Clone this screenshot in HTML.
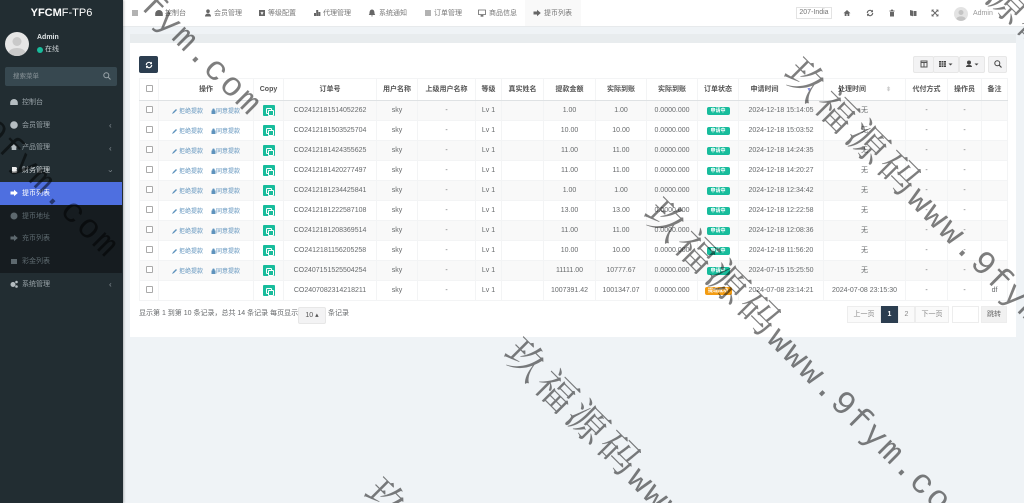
<!DOCTYPE html>
<html lang="zh"><head><meta charset="utf-8"><title>提币列表</title>
<style>
*{box-sizing:border-box}
html,body{margin:0;padding:0;width:1024px;height:503px;overflow:hidden;background:#eff3f6}
#root{position:relative;width:1024px;height:503px;overflow:hidden;contain:strict;background:#eff3f6;font:7px "Liberation Sans","Noto Sans CJK SC",sans-serif;color:#676a6c}
#ui{position:absolute;left:0;top:0;width:1024px;height:503px;filter:blur(.3px)}
.a{position:absolute;white-space:nowrap}
#side{position:absolute;left:0;top:0;width:123px;height:503px;background:#222d32;color:#8a9499;box-shadow:1px 0 2px rgba(0,0,0,.25)}
.mi{position:absolute;left:22px;white-space:nowrap;font-size:7px;line-height:10px;color:#9aa4a9;padding-top:1px}
.ic{position:absolute;left:10px;width:8px;height:8px;fill:#b5bdc1}
.ar{position:absolute;left:109px;font-size:8px;line-height:10px;color:#8a9499}
#top{position:absolute;left:123px;top:0;width:901px;height:27px;background:#fff;border-bottom:1px solid #e7eaec}
.tab{position:absolute;top:8px;line-height:10px;font-size:7px;color:#777;white-space:nowrap;padding-top:1px}
.ti{position:absolute;top:9px;width:8px;height:8px;fill:#666}
#panel{position:absolute;left:130px;top:43px;width:886px;height:294px;background:#fff}
#bar{position:absolute;left:130px;top:34px;width:886px;height:9px;background:#e8ecee}
table{position:absolute;left:139px;top:78px;width:868px;border-collapse:collapse;table-layout:fixed;font-size:7px;color:#676a6c}
th,td{border:1px solid #f3f4f5;padding:0;text-align:center;white-space:nowrap;overflow:hidden;line-height:10px}
th{height:22px;font-weight:bold;color:#555;border-bottom:1px solid #dfe2e4}
td{height:20px}
tbody tr:nth-child(odd){background:#f9f9f9}
.cb{display:inline-block;width:7px;height:7px;border:1px solid #aaa;border-radius:1px;background:#fff;vertical-align:-1px}
td.op{position:relative;color:#5f93bd;font-size:6px;text-align:left}
.op i{position:absolute;top:6px;width:30px;font-style:normal;line-height:10px}
.op svg{position:absolute;top:7px;width:5px;height:6px;fill:#5f93bd}
.g{display:inline-block;width:12px;height:11px;background:#18bc9c;border-radius:1px;position:relative;vertical-align:middle}
.g:before,.g:after{content:"";position:absolute;width:4px;height:4px;border:1px solid #fff;border-radius:1px}
.g:before{left:3px;top:3px}.g:after{left:5px;top:5px;background:#18bc9c}
.bd{display:inline-block;background:#18bc9c;color:#fff;font-size:5px;line-height:8px;height:8px;width:23px;border-radius:2px;font-weight:bold}
.or{background:#f39c12;width:27px}
.btn{position:absolute;background:#f3f3f4;border:1px solid #e7e7e7;color:#555;border-radius:2px;text-align:center}
.pg{position:absolute;top:306px;height:17px;line-height:15px;background:#fafafa;border:1px solid #ededed;color:#888;text-align:center;font-size:7px}
.wm{position:absolute;white-space:nowrap;font-family:"Noto Serif CJK SC","Liberation Serif",serif;font-size:40px;line-height:50px;letter-spacing:4px;color:#000;transform-origin:0 0;pointer-events:none;opacity:.5}
.wm span{font:34px/50px "Liberation Mono",monospace;letter-spacing:2px}
</style></head><body>
<div id="root">
<div id="ui">
<div id="bar"></div><div id="panel"></div>

<div id="top">
<svg class="ti" style="left:8px" viewBox="0 0 8 8"><path d="M1 1.500h6v1H1zM1 3.500h6v1H1zM1 5.500h6v1H1z"/></svg>
<svg class="ti" style="left:32px" viewBox="0 0 8 8"><path d="M4 1a3.800 3.800 0 0 0-3.800 3.800V7h7.600V4.800A3.800 3.800 0 0 0 4 1z"/></svg><span class="tab" style="left:42px">控制台</span>
<svg class="ti" style="left:81px" viewBox="0 0 8 8"><circle cx="4" cy="2.200" r="1.800"/><path d="M1 7.500c0-4 6-4 6 0z"/></svg><span class="tab" style="left:91px">会员管理</span>
<svg class="ti" style="left:135px" viewBox="0 0 8 8"><path d="M1 1h6v6H1z"/><path d="M3 3l1 2 1-2" stroke="#fff" fill="none"/></svg><span class="tab" style="left:145px">等级配置</span>
<svg class="ti" style="left:190px" viewBox="0 0 8 8"><path d="M1 4h2v3H1zM3.200 1h2v6h-2zM5.400 3h2v4h-2z"/></svg><span class="tab" style="left:200px">代理管理</span>
<svg class="ti" style="left:245px" viewBox="0 0 8 8"><path d="M4 .5c-2 0-2.500 2-2.500 4L.8 6h6.400l-.7-1.500c0-2-.5-4-2.500-4zM3 6.500h2L4 7.800z"/></svg><span class="tab" style="left:256px">系统通知</span>
<svg class="ti" style="left:301px" viewBox="0 0 8 8"><path d="M1 1.500h6v1H1zM1 3.500h6v1H1zM1 5.500h6v1H1z"/></svg><span class="tab" style="left:311px">订单管理</span>
<svg class="ti" style="left:355px" viewBox="0 0 8 8"><path d="M.5 1h7v4.500h-7zM3 6.500h2v.7H3z" fill="none" stroke="#666" stroke-width=".8"/></svg><span class="tab" style="left:366px">商品信息</span>
<div class="a" style="left:402px;top:0;width:56px;height:26px;background:#f9f9f9"></div>
<svg class="ti" style="left:410px" viewBox="0 0 8 8"><path d="M.5 2.500h3.500V.8L7.800 4 4 7.200V5.500H.5z"/></svg><span class="tab" style="left:421px">提币列表</span>
<div class="a" style="left:673px;top:7px;width:36px;height:12px;border:1px solid #e3e3e3;text-align:center;line-height:10px;color:#777;font-size:7px">207-India</div>
<svg class="ti" style="left:720px" viewBox="0 0 8 8"><path d="M4 1L.5 4.200h1.200V7h1.800V5h1v2h1.800V4.200h1.200z"/></svg>
<svg class="ti" style="left:743px" viewBox="0 0 8 8"><path d="M1.300 4a2.700 2.700 0 0 1 4.700-1.800M6.700 4A2.700 2.700 0 0 1 2 5.800" fill="none" stroke="#666" stroke-width="1.100"/><path d="M7 .6v2.600H4.500zM1 7.400V4.800h2.500z"/></svg>
<svg class="ti" style="left:765px" viewBox="0 0 8 8"><path d="M1.500 1.500h5v1h-5zM3 .6h2v1H3zM2 3h4v4.500H2z"/></svg>
<svg class="ti" style="left:786px" viewBox="0 0 8 8"><path d="M1 1l3 .8v5.500L1 6.500zM4.500 2h3v5h-3z"/></svg>
<svg class="ti" style="left:808px" viewBox="0 0 8 8"><path d="M1 1l6 6M7 1L1 7" stroke="#666" stroke-width="1"/><path d="M.6.600h2.500L.6 3.100zM7.400.6v2.500L4.900.6zM.6 7.400V4.900l2.500 2.500zM7.400 7.400H4.900l2.500-2.500z"/></svg>
<svg class="a" style="left:831px;top:7px" width="14" height="14" viewBox="0 0 14 14"><circle cx="7" cy="7" r="7" fill="#e3e3e3"/><circle cx="7" cy="5.500" r="2.500" fill="#c4c4c4"/><path d="M2.300 12c1-3.500 8.400-3.500 9.400 0a7 7 0 0 1-9.400 0z" fill="#c4c4c4"/></svg>
<span class="tab" style="left:850px;top:8px;color:#999">Admin</span>
</div>

<div id="side">
<div class="a" style="left:0;top:6px;width:123px;text-align:center;font-size:11px;line-height:14px;color:#fff;font-weight:bold">YFCM<span style="font-weight:normal">F-TP6</span></div>
<svg class="a" style="left:5px;top:32px" width="24" height="24" viewBox="0 0 24 24"><circle cx="12" cy="12" r="12" fill="#e6e6e6"/><circle cx="12" cy="9.500" r="4.500" fill="#c9c9c9"/><path d="M3.500 20.500c2-6 15-6 17 0a12 12 0 0 1-17 0z" fill="#c9c9c9"/></svg>
<div class="a" style="left:37px;top:33px;line-height:10px;color:#dfe4e6;font-weight:bold">Admin</div>
<div class="a" style="left:37px;top:47px;width:6px;height:6px;border-radius:50%;background:#18bc9c"></div>
<div class="a" style="left:45px;top:45px;line-height:10px;color:#ccd2d5">在线</div>
<div class="a" style="left:5px;top:67px;width:112px;height:19px;background:#374850;border-radius:2px;line-height:19px;padding-left:8px;color:#8a9499;font-size:6.500px">搜索菜单</div>
<svg class="a" style="left:103px;top:72px" width="8" height="8" viewBox="0 0 8 8"><circle cx="3.300" cy="3.300" r="2.500" fill="none" stroke="#9aa4a9"/><path d="M5 5l2.500 2.500" stroke="#9aa4a9"/></svg>

<svg class="ic" style="top:98px" viewBox="0 0 8 8"><path d="M4 1a3.800 3.800 0 0 0-3.800 3.800V7h7.600V4.800A3.800 3.800 0 0 0 4 1z"/></svg><div class="mi" style="top:97px">控制台</div>
<svg class="ic" style="top:121px" viewBox="0 0 8 8"><circle cx="4" cy="4" r="3.800"/></svg><div class="mi" style="top:120px">会员管理</div><div class="ar" style="top:121px">‹</div>
<svg class="ic" style="top:143px" viewBox="0 0 8 8"><path d="M4 1L.5 4.200h1.200V7h4.600V4.200h1.200z"/></svg><div class="mi" style="top:142px">产品管理</div><div class="ar" style="top:144px">‹</div>
<svg class="ic" style="top:166px;fill:#eee" viewBox="0 0 8 8"><path d="M2 1h3.500c2 0 2 2.800.5 3 1.800.2 1.800 3-.5 3H2z"/></svg><div class="mi" style="top:165px;color:#d5dadc">财务管理</div><div class="ar" style="top:166px;transform:rotate(-90deg);left:109px">‹</div>
<div class="a" style="left:0;top:182px;width:122px;height:23px;background:#4e6fe0"></div>
<svg class="ic" style="top:189px;fill:#fff" viewBox="0 0 8 8"><path d="M.5 2.500h3.500V.8L7.800 4 4 7.200V5.500H.5z"/></svg><div class="mi" style="top:188px;color:#fff">提币列表</div>
<div class="a" style="left:0;top:205px;width:122px;height:68px;background:#161c20"></div>
<svg class="ic" style="top:212px;fill:#5d686e" viewBox="0 0 8 8"><circle cx="4" cy="4" r="3.500"/></svg><div class="mi" style="top:211px;color:#5f6b71">提币地址</div>
<svg class="ic" style="top:234px;fill:#5d686e" viewBox="0 0 8 8"><path d="M.5 2.500h3.500V.8L7.800 4 4 7.200V5.500H.5z"/></svg><div class="mi" style="top:233px;color:#5f6b71">充币列表</div>
<svg class="ic" style="top:257px;fill:#5d686e" viewBox="0 0 8 8"><path d="M1 2h6v5H1z"/></svg><div class="mi" style="top:256px;color:#5f6b71">彩金列表</div>
<svg class="ic" style="top:280px" viewBox="0 0 8 8"><circle cx="3" cy="4.500" r="2.500"/><circle cx="6.500" cy="2" r="1.300"/><circle cx="6.500" cy="6.500" r="1.300"/></svg><div class="mi" style="top:279px">系统管理</div><div class="ar" style="top:280px">‹</div>
</div>

<div class="a" style="left:139px;top:56px;width:19px;height:17px;background:#2c3e50;border-radius:2px"></div>
<svg class="a" style="left:145px;top:61px" width="8" height="8" viewBox="0 0 8 8"><path d="M1.300 4a2.700 2.700 0 0 1 4.700-1.800M6.700 4A2.700 2.700 0 0 1 2 5.800" fill="none" stroke="#fff" stroke-width="1.100"/><path d="M7 .6v2.600H4.500zM1 7.400V4.800h2.500z" fill="#fff"/></svg>

<div class="btn" style="left:913px;top:56px;width:21px;height:17px"></div>
<div class="btn" style="left:933px;top:56px;width:26px;height:17px"></div>
<div class="btn" style="left:959px;top:56px;width:26px;height:17px"></div>
<div class="btn" style="left:988px;top:56px;width:19px;height:17px"></div>
<svg class="a" style="left:920px;top:60px" width="8" height="8" viewBox="0 0 8 8"><path d="M1 1h6v6H1zM1 2.500h6M4 2.500V7" fill="none" stroke="#555"/></svg>
<svg class="a" style="left:939px;top:60px" width="15" height="8" viewBox="0 0 15 8" fill="#444"><path d="M0 1h2v1.600H0zM2.500 1h2v1.600h-2zM5 1h2v1.600H5zM0 3.200h2v1.600H0zM2.500 3.200h2v1.600h-2zM5 3.200h2v1.600H5zM0 5.400h2V7H0zM2.500 5.400h2V7h-2zM5 5.400h2V7H5zM9.500 3.500h4l-2 2z"/></svg>
<svg class="a" style="left:965px;top:60px" width="15" height="8" viewBox="0 0 15 8" fill="#444"><circle cx="4" cy="2.500" r="2"/><path d="M1 7c0-3 6-3 6 0zM9.500 3.500h4l-2 2z"/></svg>
<svg class="a" style="left:994px;top:60px" width="8" height="8" viewBox="0 0 8 8"><circle cx="3.300" cy="3.300" r="2.500" fill="none" stroke="#444"/><path d="M5 5l2.500 2.500" stroke="#444" stroke-width="1.200"/></svg>

<table>
<colgroup><col style="width:19px"><col style="width:95px"><col style="width:30px"><col style="width:93px"><col style="width:41px"><col style="width:58px"><col style="width:26px"><col style="width:42px"><col style="width:52px"><col style="width:51px"><col style="width:51px"><col style="width:41px"><col style="width:85px"><col style="width:82px"><col style="width:42px"><col style="width:34px"><col style="width:26px"></colgroup>
<thead><tr><th><i class="cb"></i></th><th>操作</th><th>Copy</th><th>订单号</th><th>用户名称</th><th>上级用户名称</th><th>等级</th><th>真实姓名</th><th>提款金额</th><th>实际到账</th><th>实际到账</th><th>订单状态</th><th>申请时间 <span style="color:#7b83e0;font-size:5px;margin-left:26px">▼</span></th><th>处理时间 <span style="color:#ccc;font-size:6px;margin-left:18px">⬍</span></th><th>代付方式</th><th>操作员</th><th>备注</th></tr></thead>
<tbody>
<tr><td><i class="cb"></i></td><td class="op"><svg style="left:13px" viewBox="0 0 5 6"><path d="M0 6l1-2 3-3 1 1-3 3z"/></svg><i style="left:20px">拒绝提款</i><svg style="left:52px" viewBox="0 0 5 6"><path d="M.5 2.500h4V6h-4zM1.300 2.500V1.700a1.200 1.200 0 0 1 2.400 0v.8"/></svg><i style="left:57px">同意提款</i></td><td><i class="g"></i></td><td>CO2412181514052262</td><td>sky</td><td>-</td><td>Lv 1</td><td></td><td>1.00</td><td>1.00</td><td>0.0000.000</td><td><span class="bd">申请中</span></td><td>2024-12-18 15:14:05</td><td>无</td><td>-</td><td>-</td><td></td></tr>
<tr><td><i class="cb"></i></td><td class="op"><svg style="left:13px" viewBox="0 0 5 6"><path d="M0 6l1-2 3-3 1 1-3 3z"/></svg><i style="left:20px">拒绝提款</i><svg style="left:52px" viewBox="0 0 5 6"><path d="M.5 2.500h4V6h-4zM1.300 2.500V1.700a1.200 1.200 0 0 1 2.400 0v.8"/></svg><i style="left:57px">同意提款</i></td><td><i class="g"></i></td><td>CO2412181503525704</td><td>sky</td><td>-</td><td>Lv 1</td><td></td><td>10.00</td><td>10.00</td><td>0.0000.000</td><td><span class="bd">申请中</span></td><td>2024-12-18 15:03:52</td><td>无</td><td>-</td><td>-</td><td></td></tr>
<tr><td><i class="cb"></i></td><td class="op"><svg style="left:13px" viewBox="0 0 5 6"><path d="M0 6l1-2 3-3 1 1-3 3z"/></svg><i style="left:20px">拒绝提款</i><svg style="left:52px" viewBox="0 0 5 6"><path d="M.5 2.500h4V6h-4zM1.300 2.500V1.700a1.200 1.200 0 0 1 2.400 0v.8"/></svg><i style="left:57px">同意提款</i></td><td><i class="g"></i></td><td>CO2412181424355625</td><td>sky</td><td>-</td><td>Lv 1</td><td></td><td>11.00</td><td>11.00</td><td>0.0000.000</td><td><span class="bd">申请中</span></td><td>2024-12-18 14:24:35</td><td>无</td><td>-</td><td>-</td><td></td></tr>
<tr><td><i class="cb"></i></td><td class="op"><svg style="left:13px" viewBox="0 0 5 6"><path d="M0 6l1-2 3-3 1 1-3 3z"/></svg><i style="left:20px">拒绝提款</i><svg style="left:52px" viewBox="0 0 5 6"><path d="M.5 2.500h4V6h-4zM1.300 2.500V1.700a1.200 1.200 0 0 1 2.400 0v.8"/></svg><i style="left:57px">同意提款</i></td><td><i class="g"></i></td><td>CO2412181420277497</td><td>sky</td><td>-</td><td>Lv 1</td><td></td><td>11.00</td><td>11.00</td><td>0.0000.000</td><td><span class="bd">申请中</span></td><td>2024-12-18 14:20:27</td><td>无</td><td>-</td><td>-</td><td></td></tr>
<tr><td><i class="cb"></i></td><td class="op"><svg style="left:13px" viewBox="0 0 5 6"><path d="M0 6l1-2 3-3 1 1-3 3z"/></svg><i style="left:20px">拒绝提款</i><svg style="left:52px" viewBox="0 0 5 6"><path d="M.5 2.500h4V6h-4zM1.300 2.500V1.700a1.200 1.200 0 0 1 2.400 0v.8"/></svg><i style="left:57px">同意提款</i></td><td><i class="g"></i></td><td>CO2412181234425841</td><td>sky</td><td>-</td><td>Lv 1</td><td></td><td>1.00</td><td>1.00</td><td>0.0000.000</td><td><span class="bd">申请中</span></td><td>2024-12-18 12:34:42</td><td>无</td><td>-</td><td>-</td><td></td></tr>
<tr><td><i class="cb"></i></td><td class="op"><svg style="left:13px" viewBox="0 0 5 6"><path d="M0 6l1-2 3-3 1 1-3 3z"/></svg><i style="left:20px">拒绝提款</i><svg style="left:52px" viewBox="0 0 5 6"><path d="M.5 2.500h4V6h-4zM1.300 2.500V1.700a1.200 1.200 0 0 1 2.400 0v.8"/></svg><i style="left:57px">同意提款</i></td><td><i class="g"></i></td><td>CO2412181222587108</td><td>sky</td><td>-</td><td>Lv 1</td><td></td><td>13.00</td><td>13.00</td><td>0.0000.000</td><td><span class="bd">申请中</span></td><td>2024-12-18 12:22:58</td><td>无</td><td>-</td><td>-</td><td></td></tr>
<tr><td><i class="cb"></i></td><td class="op"><svg style="left:13px" viewBox="0 0 5 6"><path d="M0 6l1-2 3-3 1 1-3 3z"/></svg><i style="left:20px">拒绝提款</i><svg style="left:52px" viewBox="0 0 5 6"><path d="M.5 2.500h4V6h-4zM1.300 2.500V1.700a1.200 1.200 0 0 1 2.400 0v.8"/></svg><i style="left:57px">同意提款</i></td><td><i class="g"></i></td><td>CO2412181208369514</td><td>sky</td><td>-</td><td>Lv 1</td><td></td><td>11.00</td><td>11.00</td><td>0.0000.000</td><td><span class="bd">申请中</span></td><td>2024-12-18 12:08:36</td><td>无</td><td>-</td><td>-</td><td></td></tr>
<tr><td><i class="cb"></i></td><td class="op"><svg style="left:13px" viewBox="0 0 5 6"><path d="M0 6l1-2 3-3 1 1-3 3z"/></svg><i style="left:20px">拒绝提款</i><svg style="left:52px" viewBox="0 0 5 6"><path d="M.5 2.500h4V6h-4zM1.300 2.500V1.700a1.200 1.200 0 0 1 2.400 0v.8"/></svg><i style="left:57px">同意提款</i></td><td><i class="g"></i></td><td>CO2412181156205258</td><td>sky</td><td>-</td><td>Lv 1</td><td></td><td>10.00</td><td>10.00</td><td>0.0000.000</td><td><span class="bd">申请中</span></td><td>2024-12-18 11:56:20</td><td>无</td><td>-</td><td>-</td><td></td></tr>
<tr><td><i class="cb"></i></td><td class="op"><svg style="left:13px" viewBox="0 0 5 6"><path d="M0 6l1-2 3-3 1 1-3 3z"/></svg><i style="left:20px">拒绝提款</i><svg style="left:52px" viewBox="0 0 5 6"><path d="M.5 2.500h4V6h-4zM1.300 2.500V1.700a1.200 1.200 0 0 1 2.400 0v.8"/></svg><i style="left:57px">同意提款</i></td><td><i class="g"></i></td><td>CO2407151525504254</td><td>sky</td><td>-</td><td>Lv 1</td><td></td><td>11111.00</td><td>10777.67</td><td>0.0000.000</td><td><span class="bd">申请中</span></td><td>2024-07-15 15:25:50</td><td>无</td><td>-</td><td>-</td><td></td></tr>
<tr><td><i class="cb"></i></td><td></td><td><i class="g"></i></td><td>CO2407082314218211</td><td>sky</td><td>-</td><td>Lv 1</td><td></td><td>1007391.42</td><td>1001347.07</td><td>0.0000.000</td><td><span class="bd or">提现成功</span></td><td>2024-07-08 23:14:21</td><td>2024-07-08 23:15:30</td><td>-</td><td>-</td><td>df</td></tr>
</tbody></table>

<div class="a" style="left:139px;top:309px;line-height:10px">显示第 1 到第 10 条记录，总共 14 条记录 每页显示</div>
<div class="btn" style="left:298px;top:307px;width:28px;height:17px;line-height:15px;font-size:7px">10 ▴</div>
<div class="a" style="left:328px;top:309px;line-height:10px">条记录</div>
<div class="pg" style="left:847px;width:34px">上一页</div>
<div class="pg" style="left:881px;width:17px;background:#2c3e50;color:#fff;border-color:#2c3e50;font-weight:bold">1</div>
<div class="pg" style="left:898px;width:17px">2</div>
<div class="pg" style="left:915px;width:34px">下一页</div>
<div class="pg" style="left:952px;width:27px;background:#fff"></div>
<div class="pg" style="left:981px;width:26px;background:#f1f1f1;color:#666">跳转</div>
</div>

<div class="wm" style="left:-38px;top:-193px;transform:rotate(45deg) translate(-22px,-25px)">玖福源码<span>www.9fym.com</span></div>
<div class="wm" style="left:-181px;top:-51px;transform:rotate(45deg) translate(-22px,-25px)">玖福源码<span>www.9fym.com</span></div>
<div class="wm" style="left:948px;top:-60px;transform:rotate(45deg) translate(-22px,-25px)">玖福源码<span>www.9fym.com</span></div>
<div class="wm" style="left:808px;top:80px;transform:rotate(45deg) translate(-22px,-25px)">玖福源码<span>www.9fym.com</span></div>
<div class="wm" style="left:668px;top:220px;transform:rotate(45deg) translate(-22px,-25px)">玖福源码<span>www.9fym.com</span></div>
<div class="wm" style="left:528px;top:360px;transform:rotate(45deg) translate(-22px,-25px)">玖福源码<span>www.9fym.com</span></div>
<div class="wm" style="left:388px;top:500px;transform:rotate(45deg) translate(-22px,-25px)">玖福源码<span>www.9fym.com</span></div>
</div>
</body></html>
